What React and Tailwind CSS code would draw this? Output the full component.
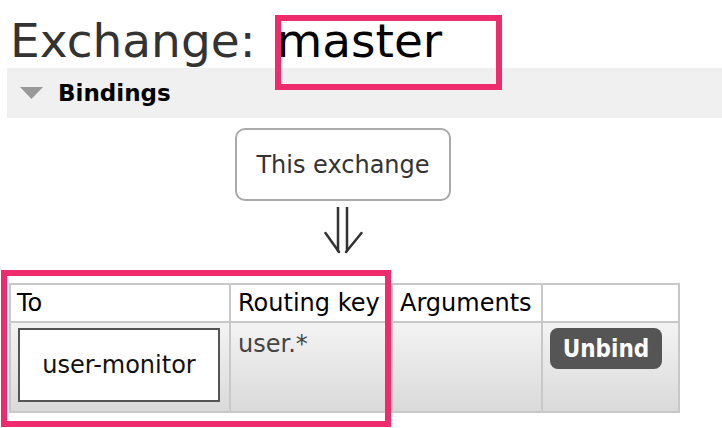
import React from "react";

export default function App() {
  return (
    <div className="relative w-[722px] h-[428px] overflow-hidden bg-white font-['DejaVu_Sans',sans-serif]">
      <h1 className="mt-[14px] pl-[10px] h-[54px] text-[47px] leading-[54px] text-[#333] whitespace-nowrap">
        Exchange: <span className="ml-[6px] text-black">master</span>
      </h1>

      <div className="ml-[7px] h-[50px] bg-[#f0f0f0] flex items-center">
        <svg width="23" height="12" viewBox="0 0 23 12" className="ml-[13px]">
          <polygon points="0,0 23,0 11.5,12" fill="#999" />
        </svg>
        <span className="ml-[15px] text-[23px] font-bold text-black leading-none">Bindings</span>
      </div>

      <div className="mt-[10px] ml-[235px] w-[216px] h-[73px] rounded-[10px] border-2 border-[#aaa] flex items-center justify-center text-[24px] text-[#333]">
        This exchange
      </div>

      <svg width="40" height="48" viewBox="0 0 40 48" className="mt-[6px] ml-[324px] block">
        <g stroke="#333" strokeWidth="2.5" fill="none" strokeLinecap="round">
          <line x1="14" y1="0" x2="14" y2="44" />
          <line x1="23" y1="0" x2="23" y2="44" />
          <line x1="1.5" y1="26" x2="15" y2="45" />
          <line x1="37.5" y1="26" x2="22" y2="45" />
        </g>
      </svg>

      <div className="mt-[28px] ml-[9px] w-max grid grid-cols-[218px_160px_148px_135px] gap-[2px] p-[2px] bg-[#c8c8c8] text-[24px]">
        <div className="bg-white h-[36px] leading-[36px] pl-[6px] text-black">To</div>
        <div className="bg-white h-[36px] leading-[36px] pl-[7px] text-black whitespace-nowrap">Routing key</div>
        <div className="bg-white h-[36px] leading-[36px] pl-[7px] text-black">Arguments</div>
        <div className="bg-white h-[36px]"></div>

        <div className="h-[88px] bg-linear-to-b from-[#f3f3f3] to-[#dadada] pt-[5px] pl-[7px]">
          <div className="w-[202px] h-[74px] border-2 border-[#555] bg-white flex items-center justify-center text-[#111]">
            user-monitor
          </div>
        </div>
        <div className="h-[88px] bg-linear-to-b from-[#f3f3f3] to-[#dadada] pt-[7px] pl-[7px] leading-[28px] text-[#444]">
          user.*
        </div>
        <div className="h-[88px] bg-linear-to-b from-[#f3f3f3] to-[#dadada]"></div>
        <div className="h-[88px] bg-linear-to-b from-[#f3f3f3] to-[#dadada] pt-[5px] pl-[7px]">
          <div className="w-[112px] h-[41px] rounded-[8px] bg-[#555] flex items-center justify-center text-white font-bold text-[24px] font-['DejaVu_Sans_Condensed','DejaVu_Sans',sans-serif]">
            Unbind
          </div>
        </div>
      </div>

      <div className="absolute left-[275px] top-[15px] w-[227px] h-[75px] border-[6px] border-[#ee2b6c]"></div>
      <div className="absolute left-[1px] top-[270px] w-[390px] h-[157px] border-[6px] border-[#ee2b6c]"></div>
    </div>
  );
}
